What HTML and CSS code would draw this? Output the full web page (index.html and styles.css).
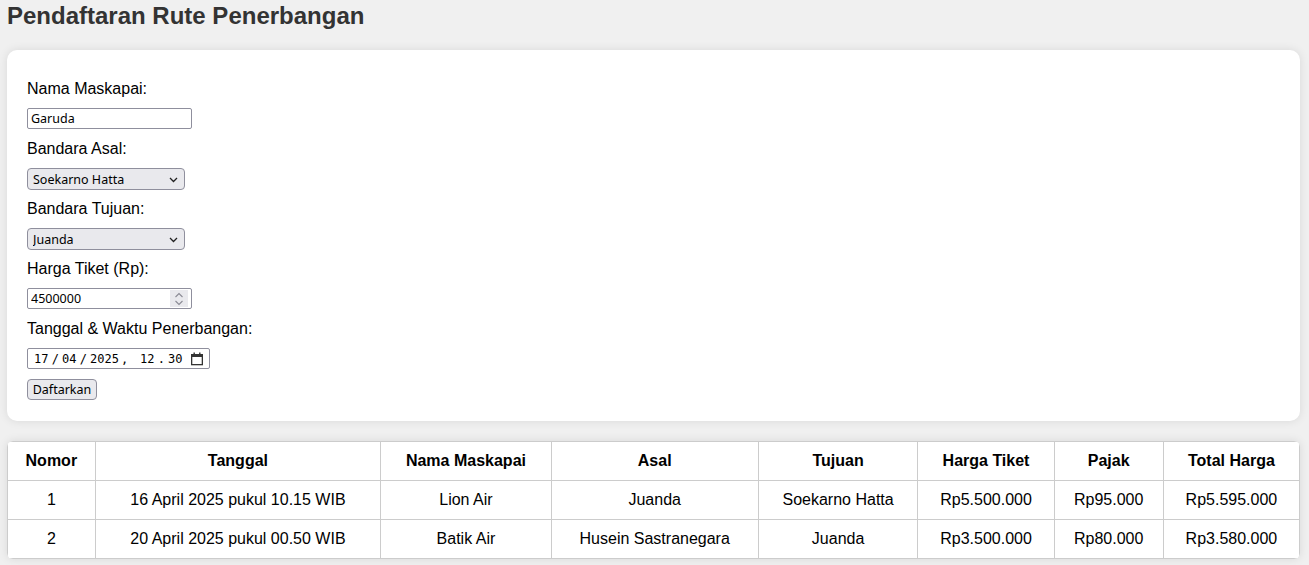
FILE: index.html
```html
<!DOCTYPE html>
<html lang="id">
<head>
<meta charset="utf-8">
<title>Pendaftaran Rute Penerbangan</title>
<link rel="stylesheet" href="styles.css">
</head>
<body>
<h1 class="title">Pendaftaran Rute Penerbangan</h1>

<form class="card">
  <label class="lbl" for="maskapai">Nama Maskapai:</label>
  <input class="ctl text" id="maskapai" type="text" value="Garuda">

  <label class="lbl" for="asal">Bandara Asal:</label>
  <div class="sel-wrap">
    <select class="ctl sel" id="asal">
      <option>Soekarno Hatta</option>
    </select>
    <svg class="chev" width="9" height="6" viewBox="0 0 9 6"><path d="M1 1l3.5 3.5L8 1" fill="none" stroke="#222" stroke-width="1.3"/></svg>
  </div>

  <label class="lbl" for="tujuan">Bandara Tujuan:</label>
  <div class="sel-wrap">
    <select class="ctl sel" id="tujuan">
      <option>Juanda</option>
    </select>
    <svg class="chev" width="9" height="6" viewBox="0 0 9 6"><path d="M1 1l3.5 3.5L8 1" fill="none" stroke="#222" stroke-width="1.3"/></svg>
  </div>

  <label class="lbl" for="harga">Harga Tiket (Rp):</label>
  <div class="num-wrap">
    <input class="ctl text num" id="harga" type="number" value="4500000">
    <div class="spin">
      <svg width="10" height="16" viewBox="0 0 10 16"><path d="M1.5 6L5 2.5 8.5 6M1.5 10L5 13.5 8.5 10" fill="none" stroke="#8a8a94" stroke-width="1.1"/></svg>
    </div>
  </div>

  <label class="lbl">Tanggal &amp; Waktu Penerbangan:</label>
  <div class="ctl dt">
    <span class="seg">17</span><span class="sep">/</span><span class="seg">04</span><span class="sep">/</span><span class="seg">2025</span><span class="comma">,</span><span class="seg">12</span><span class="sep">.</span><span class="seg">30</span>
    <svg class="cal" width="14" height="14" viewBox="0 0 14 14"><rect x="1.65" y="2.65" width="10.7" height="10" fill="none" stroke="#333" stroke-width="1.3"/><rect x="1" y="2" width="12" height="3" fill="#333"/><rect x="3.5" y="0.5" width="1.4" height="3" fill="#333"/><rect x="9.1" y="0.5" width="1.4" height="3" fill="#333"/></svg>
  </div>

  <button class="btn" type="button">Daftarkan</button>
</form>

<table class="tbl">
  <thead>
    <tr>
      <th>Nomor</th>
      <th>Tanggal</th>
      <th>Nama Maskapai</th>
      <th>Asal</th>
      <th>Tujuan</th>
      <th>Harga Tiket</th>
      <th>Pajak</th>
      <th>Total Harga</th>
    </tr>
  </thead>
  <tbody>
    <tr>
      <td>1</td>
      <td>16 April 2025 pukul 10.15 WIB</td>
      <td>Lion Air</td>
      <td>Juanda</td>
      <td>Soekarno Hatta</td>
      <td>Rp5.500.000</td>
      <td>Rp95.000</td>
      <td>Rp5.595.000</td>
    </tr>
    <tr>
      <td>2</td>
      <td>20 April 2025 pukul 00.50 WIB</td>
      <td>Batik Air</td>
      <td>Husein Sastranegara</td>
      <td>Juanda</td>
      <td>Rp3.500.000</td>
      <td>Rp80.000</td>
      <td>Rp3.580.000</td>
    </tr>
  </tbody>
</table>
</body>
</html>
```

FILE: styles.css
```css
* {
  box-sizing: border-box;
}

html, body {
  margin: 0;
  background: #f0f0f0;
}

body {
  padding: 2px 9px 20px 7px;
  font-family: "Liberation Sans", Arial, sans-serif;
  color: #000;
}

.title {
  margin: 0 0 20px 0;
  font-size: 24px;
  line-height: 28px;
  font-weight: bold;
  color: #333;
}

.card {
  background: #fff;
  border-radius: 10px;
  box-shadow: 0 0 10px rgba(0, 0, 0, 0.1);
  padding: 20px 20px 21px 20px;
  display: flex;
  flex-direction: column;
  align-items: flex-start;
}

.lbl {
  display: block;
  font-size: 16px;
  line-height: 18px;
  margin: 10px 0 10px 0;
}

.ctl {
  font-family: "Noto Sans", "Liberation Sans", sans-serif;
  font-size: 12.5px;
  color: #000;
}

.text {
  display: block;
  width: 165px;
  height: 21px;
  margin: 0 0 1px 0;
  padding: 0 3px;
  border: 1px solid #8f8f9d;
  border-radius: 2px;
  background: #fff;
  outline: none;
}

.num {
  -moz-appearance: textfield;
  appearance: textfield;
  margin: 0;
}

.num::-webkit-inner-spin-button,
.num::-webkit-outer-spin-button {
  -webkit-appearance: none;
  margin: 0;
}

.num-wrap {
  position: relative;
  width: 165px;
  height: 22px;
}

.spin {
  position: absolute;
  left: 143px;
  top: 2px;
  width: 18px;
  height: 17px;
  background: #e9e9ed;
  display: flex;
  align-items: center;
  justify-content: center;
}

.sel-wrap {
  position: relative;
  width: 158px;
  height: 22px;
}

.sel {
  -webkit-appearance: none;
  appearance: none;
  display: block;
  width: 158px;
  height: 22px;
  margin: 0;
  padding: 0 5px;
  border: 1px solid #8f8f9d;
  border-radius: 4px;
  background: #e9e9ed;
  outline: none;
}

.chev {
  position: absolute;
  left: 142px;
  top: 9px;
  pointer-events: none;
}

.dt {
  display: flex;
  align-items: center;
  width: 183px;
  height: 21px;
  margin-bottom: 1px;
  padding: 0 0 0 6px;
  border: 1px solid #8f8f9d;
  border-radius: 2px;
  background: #fff;
  font-family: "DejaVu Sans Mono", "Liberation Mono", monospace;
  font-size: 12px;
  white-space: pre;
}

.seg {
  display: inline-block;
}

.sep {
  display: inline-block;
  width: 13.6px;
  text-align: center;
}

.comma {
  display: inline-block;
  width: 21px;
  padding-left: 2px;
}

.cal {
  margin-left: 7px;
  flex: none;
}

.btn {
  margin-top: 9px;
  height: 21px;
  width: 70px;
  padding: 0;
  font-family: "Noto Sans", "Liberation Sans", sans-serif;
  font-size: 12.5px;
  color: #000;
  background: #e9e9ed;
  border: 1px solid #8f8f9d;
  border-radius: 4px;
}

.tbl {
  width: 100%;
  margin-top: 20px;
  border-collapse: collapse;
  background: #fff;
  border-radius: 6px;
  overflow: hidden;
  box-shadow: 0 0 10px rgba(0, 0, 0, 0.1);
  font-size: 16px;
}

.tbl th,
.tbl td {
  border: 1px solid #ccc;
  padding: 10px;
  text-align: center;
  line-height: 18px;
}

.tbl th {
  font-weight: bold;
}
```
